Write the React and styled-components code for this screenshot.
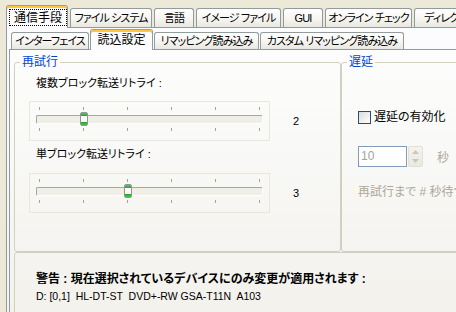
import React from 'react';
import styled, { createGlobalStyle, css } from 'styled-components';

const GlobalStyle = createGlobalStyle`
  html, body { margin: 0; padding: 0; background: #ECE9D8; }
  body {
    font-family: "Liberation Sans", "Noto Sans CJK JP", sans-serif;
    font-size: 11px;
    color: #000;
    font-feature-settings: "palt";
  }
  #root { width: 456px; height: 312px; overflow: hidden; }
`;

const Window = styled.div`
  box-sizing: border-box;
  width: 456px;
  height: 312px;
  overflow: hidden;
  background: #ECE9D8;
  padding: 5px 0 0 6px;
`;

const tabBase = css`
  box-sizing: border-box;
  flex: none;
  display: flex;
  align-items: center;
  justify-content: center;
  border: 1px solid #919B9C;
  border-bottom: none;
  border-radius: 3px 3px 0 0;
  white-space: nowrap;
  overflow: hidden;
  font-size: 11px;
  letter-spacing: -0.9px;
  line-height: 14px;
  background: linear-gradient(#FFFFFF, #F6F5F1 55%, #E8E7E0);
`;

const activeTab = css`
  position: relative;
  z-index: 1;
  margin-bottom: -1px;
  border-top-color: #E68B2C;
  box-shadow: inset 0 2px 0 #FFC83C;
  background: #FCFCFE;
  font-size: 12px;
  letter-spacing: 0;
`;

const OuterTabs = styled.div`
  display: flex;
  align-items: flex-end;
  gap: 2px;
  height: 22px;
`;

const OuterTab = styled.div`
  ${tabBase};
  width: ${p => p.$w}px;
  height: 19px;
  ${p => p.$active && css`
    ${activeTab};
    height: 23px;
    padding: 3px 0 2px 2px;
    align-items: stretch;
  `}
`;

const FocusLabel = styled.span`
  flex: 1;
  display: flex;
  align-items: center;
  justify-content: center;
  border: 1px dotted #000;
`;

const OuterPanel = styled.div`
  box-sizing: border-box;
  width: 520px;
  height: 320px;
  border: 1px solid #919B9C;
  background: linear-gradient(#FCFCFE, #F4F3EE);
`;

const InnerTabs = styled.div`
  display: flex;
  align-items: flex-end;
  gap: 1px;
  height: 21px;
  padding-left: 4px;
`;

const InnerTab = styled.div`
  ${tabBase};
  width: ${p => p.$w}px;
  height: 17px;
  ${p => p.$active && css`
    ${activeTab};
    height: 21px;
  `}
`;

const InnerPanel = styled.div`
  box-sizing: border-box;
  margin-left: 2px;
  width: 510px;
  height: 300px;
  border: 1px solid #919B9C;
  background: linear-gradient(#FDFDFD, #F1F0EA);
  padding: 5px 0 0 4px;
`;

const GroupRow = styled.div`
  display: flex;
  height: 197px;
`;

const Group = styled.fieldset`
  box-sizing: border-box;
  margin: 0;
  padding: 0;
  min-width: 0;
  flex: none;
  border: 1px solid #D0D0BF;
  border-radius: 3px;
  width: ${p => p.$w}px;
  height: ${p => p.$h}px;
`;

const Legend = styled.legend`
  margin-left: 5px;
  padding: 0 2px;
  color: #0046D5;
  font-size: 12px;
  line-height: 14px;
`;

const FieldLabel = styled.div`
  margin-top: ${p => p.$mt}px;
  padding-left: 21px;
  line-height: 14px;
  white-space: nowrap;
`;

const SliderRow = styled.div`
  display: flex;
  align-items: center;
  margin-top: ${p => p.$mt}px;
  padding-left: 14px;
`;

const SliderBox = styled.div`
  box-sizing: border-box;
  width: 241px;
  height: 40px;
  border: 1px solid #E9E7DC;
  display: flex;
  flex-direction: column;
`;

const TickRow = styled.div`
  display: flex;
  justify-content: space-between;
  width: 221px;
  height: 3px;
  margin: ${p => p.$mt}px 0 0 9px;
`;

const Tick = styled.span`
  width: 1px;
  height: 3px;
  background: #A3A295;
`;

const Track = styled.div`
  position: relative;
  box-sizing: border-box;
  width: 227px;
  height: 9px;
  margin: 5px 0 0 6px;
  border: 1px solid;
  border-color: #A7A6A0 #FFFFFF #FFFFFF #A7A6A0;
  border-radius: 2px;
  background: #EFEEE7;
`;

const Thumb = styled.span`
  position: absolute;
  top: -4px;
  box-sizing: border-box;
  width: 8px;
  height: 14px;
  border: 1px solid #8C979D;
  border-radius: 2px;
  background: linear-gradient(
    #5BCB5B 0, #21A621 3px,
    #FFFFFF 3px, #F4F4F0 9px,
    #21A621 9px, #4FC04F 100%
  );
`;

const Value = styled.span`
  margin-left: 23px;
  font-family: "Liberation Sans", sans-serif;
  font-size: 11px;
`;

const CheckRow = styled.label`
  display: flex;
  align-items: center;
  margin-top: 42px;
  padding-left: 16px;
  line-height: 13px;
  font-size: 12px;
`;

const CheckBox = styled.span`
  box-sizing: border-box;
  width: 13px;
  height: 13px;
  margin-right: 3px;
  border: 1px solid #1C5180;
  background: linear-gradient(135deg, #DCDCD7, #FFFFFF);
`;

const SpinRow = styled.div`
  display: flex;
  align-items: center;
  margin-top: 22px;
  padding-left: 16px;
  color: #ACA899;
  font-size: 12px;
`;

const SpinInput = styled.div`
  box-sizing: border-box;
  width: 49px;
  height: 21px;
  border: 1px solid #7F9DB9;
  background: #FFFFFF;
  padding: 2px 0 0 2px;
  font-size: 12px;
  line-height: 15px;
  color: #A3A39C;
`;

const SpinButtons = styled.div`
  box-sizing: border-box;
  width: 15px;
  height: 21px;
  margin-left: 1px;
  border: 1px solid #E2E0D6;
  border-radius: 2px;
  background: linear-gradient(#F4F3EE, #E9E8E1);
  display: flex;
  flex-direction: column;
  align-items: center;
  justify-content: space-around;
`;

const Unit = styled.span`
  margin-left: 14px;
`;

const GrayText = styled.div`
  margin-top: 18px;
  padding-left: 16px;
  line-height: 14px;
  white-space: nowrap;
  color: #ACA899;
  font-size: 12px;
`;

const Notice = styled.div`
  padding: 19px 0 0 21px;
`;

const NoticeTitle = styled.div`
  font-weight: bold;
  font-size: 12px;
  line-height: 15px;
  white-space: nowrap;
`;

const DeviceLine = styled.div`
  margin-top: 2px;
  line-height: 14px;
  font-size: 10.5px;
  white-space: pre;
`;

const Arrow = ({ up }) => (
  <svg width="7" height="4" viewBox="0 0 7 4">
    <polygon points={up ? '0,4 3.5,0 7,4' : '0,0 3.5,4 7,0'} fill="#C9C7BA" />
  </svg>
);

const Slider = ({ index, value }) => (
  <>
    <SliderBox>
      <TickRow $mt={5}>{[0, 1, 2, 3, 4, 5].map(i => <Tick key={i} />)}</TickRow>
      <Track>
        <Thumb style={{ left: 44 * index - 1 }} />
      </Track>
      <TickRow $mt={4}>{[0, 1, 2, 3, 4, 5].map(i => <Tick key={i} />)}</TickRow>
    </SliderBox>
    <Value>{value}</Value>
  </>
);

const outerTabs = [
  ['通信手段', 62, true],
  ['ファイル システム', 82],
  ['言語', 40],
  ['イメージ ファイル', 85],
  ['GUI', 40],
  ['オンライン チェック', 87],
  ['ディレクトリ', 70],
];

const innerTabs = [
  ['インターフェイス', 78],
  ['読込設定', 63, true],
  ['リマッピング読み込み', 105],
  ['カスタム リマッピング読み込み', 144],
];

export default function App() {
  return (
    <>
      <GlobalStyle />
      <Window>
        <OuterTabs>
          {outerTabs.map(([t, w, a]) => (
            <OuterTab key={t} $w={w} $active={a}>
              {a ? <FocusLabel>{t}</FocusLabel> : t}
            </OuterTab>
          ))}
        </OuterTabs>
        <OuterPanel>
          <InnerTabs>
            {innerTabs.map(([t, w, a]) => (
              <InnerTab key={t} $w={w} $active={a}>{t}</InnerTab>
            ))}
          </InnerTabs>
          <InnerPanel>
            <GroupRow>
              <Group $w={327} $h={197}>
                <Legend>再試行</Legend>
                <FieldLabel $mt={7}>複数ブロック転送リトライ :</FieldLabel>
                <SliderRow $mt={11}>
                  <Slider index={1} value="2" />
                </SliderRow>
                <FieldLabel $mt={6}>単ブロック転送リトライ :</FieldLabel>
                <SliderRow $mt={12}>
                  <Slider index={2} value="3" />
                </SliderRow>
              </Group>
              <Group $w={160} $h={197}>
                <Legend>遅延</Legend>
                <CheckRow>
                  <CheckBox />
                  遅延の有効化
                </CheckRow>
                <SpinRow>
                  <SpinInput>10</SpinInput>
                  <SpinButtons>
                    <Arrow up />
                    <Arrow />
                  </SpinButtons>
                  <Unit>秒</Unit>
                </SpinRow>
                <GrayText>再試行まで # 秒待つ</GrayText>
              </Group>
            </GroupRow>
            <Group $w={490} $h={80}>
              <Notice>
                <NoticeTitle>警告 : 現在選択されているデバイスにのみ変更が適用されます :</NoticeTitle>
                <DeviceLine>{'D: [0,1]  HL-DT-ST  DVD+-RW GSA-T11N  A103'}</DeviceLine>
              </Notice>
            </Group>
          </InnerPanel>
        </OuterPanel>
      </Window>
    </>
  );
}
